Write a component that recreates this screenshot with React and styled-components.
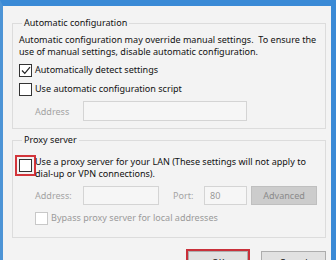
import React from 'react'
import styled, { createGlobalStyle } from 'styled-components'

const GlobalStyle = createGlobalStyle`
  html, body {
    margin: 0;
    padding: 0;
    background: #f3f3f3;
  }
  body {
    font-family: "Noto Sans", "Open Sans", sans-serif;
    font-size: 9.05px;
    color: #111;
  }
`

const Window = styled.div`
  width: 336px;
  height: 260px;
  box-sizing: border-box;
  border-top: 6px solid #3a8ad6;
  border-left: 3px solid #4d94d6;
  border-right: 5px solid #3a8ad6;
  background: #f3f3f3;
  overflow: hidden;
  padding: 10px 5px 0 9px;
`

const Group = styled.fieldset`
  margin: 0 0 ${(p) => p.$gap || 0}px 0;
  padding: 0 6px ${(p) => p.$bottom || 0}px 6px;
  border: 1px solid #dcdcdc;
  min-width: 0;
  display: flex;
  flex-direction: column;
`

const Legend = styled.legend`
  margin-left: 3px;
  padding: 0 2px;
  line-height: 14px;
`

const Desc = styled.p`
  margin: 4px 0 0;
  line-height: 12px;
  white-space: nowrap;
`

const CheckRow = styled.label`
  display: flex;
  align-items: ${(p) => (p.$multi ? 'flex-start' : 'center')};
  gap: 3px;
  margin-top: ${(p) => p.$top || 0}px;
  margin-left: ${(p) => p.$indent || 0}px;
  line-height: 12px;
  min-height: 16px;
  color: ${(p) => (p.$disabled ? '#9a9a9a' : '#111')};
  white-space: nowrap;
`

const Box = styled.span`
  flex: none;
  width: 11px;
  height: 11px;
  border: 1px solid ${(p) => (p.$disabled ? '#c8c8c8' : '#333')};
  background: #fff;
  display: flex;
  align-items: center;
  justify-content: center;
  margin-top: ${(p) => p.$top || 0}px;
  outline: ${(p) => (p.$highlight ? '2px solid #d3353b' : 'none')};
  outline-offset: 2px;
`

const FieldRow = styled.div`
  display: flex;
  align-items: center;
  margin-top: ${(p) => p.$top || 0}px;
  padding-left: 16px;
`

const FieldLabel = styled.span`
  color: #a3a3a3;
  width: ${(p) => p.$w}px;
  margin-left: ${(p) => p.$left || 0}px;
  flex: none;
`

const Input = styled.div`
  box-sizing: border-box;
  width: ${(p) => p.$w}px;
  height: ${(p) => p.$h || 19}px;
  border: 1px solid #d4d4d4;
  background: #f6f6f6;
  color: #9a9a9a;
  padding-left: 5px;
  line-height: 17px;
  flex: none;
`

const DisabledButton = styled.div`
  box-sizing: border-box;
  width: 66px;
  height: 19px;
  margin-left: 4px;
  background: #cccccc;
  border: 1px solid #bfbfbf;
  color: #8a8a8a;
  text-align: center;
  line-height: 17px;
`

const Buttons = styled.div`
  display: flex;
  justify-content: flex-end;
  gap: 13px;
  margin-top: 13px;
`

const Button = styled.div`
  box-sizing: border-box;
  width: ${(p) => p.$w}px;
  height: 22px;
  background: #e1e1e1;
  border: 1px solid #adadad;
  text-align: center;
  line-height: 22px;
  outline: ${(p) => (p.$highlight ? '2px solid #c9303a' : 'none')};
`

const Check = () => (
  <svg width="10" height="9" viewBox="0 0 10 9">
    <path d="M1 4.5 L3.8 7.3 L9 1.2" fill="none" stroke="#222" strokeWidth="1.2" />
  </svg>
)

export default function App() {
  return (
    <>
      <GlobalStyle />
      <Window>
        <Group $bottom={7} $gap={4}>
          <Legend>Automatic configuration</Legend>
          <Desc>
            Automatic configuration may override manual settings.&nbsp; To ensure the
            <br />
            use of manual settings, disable automatic configuration.
          </Desc>
          <CheckRow $top={4}>
            <Box><Check /></Box>
            Automatically detect settings
          </CheckRow>
          <CheckRow $top={3}>
            <Box />
            Use automatic configuration script
          </CheckRow>
          <FieldRow $top={4}>
            <FieldLabel $w={48}>Address</FieldLabel>
            <Input $w={164} $h={20} />
          </FieldRow>
        </Group>
        <Group $bottom={11}>
          <Legend>Proxy server</Legend>
          <CheckRow $top={9} $multi>
            <Box $highlight $top={3} />
            <span>
              Use a proxy server for your LAN (These settings will not apply to
              <br />
              dial-up or VPN connections).
            </span>
          </CheckRow>
          <FieldRow $top={6}>
            <FieldLabel $w={48}>Address:</FieldLabel>
            <Input $w={76} />
            <FieldLabel $w={31} $left={14}>Port:</FieldLabel>
            <Input $w={43}>80</Input>
            <DisabledButton>Advanced</DisabledButton>
          </FieldRow>
          <CheckRow $top={5} $indent={16} $disabled>
            <Box $disabled />
            Bypass proxy server for local addresses
          </CheckRow>
        </Group>
        <Buttons>
          <Button $w={60} $highlight>OK</Button>
          <Button $w={65}>Cancel</Button>
        </Buttons>
      </Window>
    </>
  )
}
